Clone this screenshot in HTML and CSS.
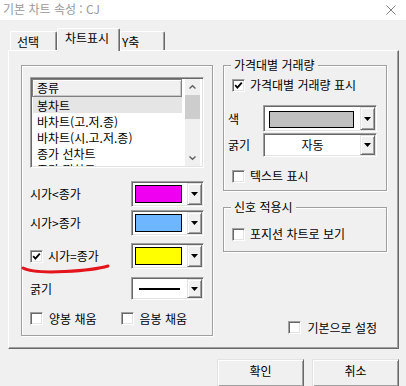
FILE: index.html
```html
<!DOCTYPE html>
<html lang="ko">
  <head>
    <meta charset="UTF-8" />
    <meta name="viewport" content="width=device-width, initial-scale=1.0" />
    <title>기본 차트 속성</title>
    <link rel="stylesheet" href="styles.css">
  </head>
  <body>
    <div class="titlebar">
      <span class="title">기본 차트 속성 : CJ</span>
      <svg class="close" viewBox="0 0 10 10"><path d="M0.5 0.5 L9.5 9.5 M9.5 0.5 L0.5 9.5" /></svg>
    </div>

    <div class="dialog">
      <div class="tabs">
        <div class="tab tab-select">선택</div>
        <div class="tab tab-chart active">차트표시</div>
        <div class="tab tab-y">Y축</div>
      </div>

      <div class="panel">
        <div class="group-chart">
          <div class="listbox">
            <div class="list">
              <div class="list-head">종류</div>
              <div class="list-item selected">봉차트</div>
              <div class="list-item">바차트(고.저.종)</div>
              <div class="list-item">바차트(시.고.저.종)</div>
              <div class="list-item">종가 선차트</div>
              <div class="list-item">종가 꺾차트</div>
            </div>
            <div class="scrollbar">
              <div class="scroll-btn"><svg viewBox="0 0 7 4"><path d="M0.5 3.5 L3.5 0.7 L6.5 3.5" /></svg></div>
              <div class="scroll-track"><div class="scroll-thumb"></div></div>
              <div class="scroll-btn"><svg viewBox="0 0 7 4"><path d="M0.5 0.5 L3.5 3.3 L6.5 0.5" /></svg></div>
            </div>
          </div>

          <div class="field-row row-up">
            <span>시가&lt;종가</span>
            <div class="combo combo-small">
              <div class="combo-field"><span class="swatch swatch-magenta"></span></div>
              <div class="drop-btn"><svg viewBox="0 0 7 4"><polygon points="0,0 7,0 3.5,4" /></svg></div>
            </div>
          </div>

          <div class="field-row row-down">
            <span>시가&gt;종가</span>
            <div class="combo combo-small">
              <div class="combo-field"><span class="swatch swatch-blue"></span></div>
              <div class="drop-btn"><svg viewBox="0 0 7 4"><polygon points="0,0 7,0 3.5,4" /></svg></div>
            </div>
          </div>

          <div class="field-row row-same">
            <label class="check-label">
              <span class="check"><svg viewBox="0 0 9 9"><path d="M1.2 4.2 L3.4 6.6 L7.8 1.6" /></svg></span>
              시가=종가
            </label>
            <div class="combo combo-small">
              <div class="combo-field"><span class="swatch swatch-yellow"></span></div>
              <div class="drop-btn"><svg viewBox="0 0 7 4"><polygon points="0,0 7,0 3.5,4" /></svg></div>
            </div>
          </div>

          <div class="field-row row-line">
            <span>굵기</span>
            <div class="combo combo-line">
              <div class="combo-field"><span class="line-sample"></span></div>
              <div class="drop-btn"><svg viewBox="0 0 7 4"><polygon points="0,0 7,0 3.5,4" /></svg></div>
            </div>
          </div>

          <div class="fill-row">
            <label class="check-label"><span class="check"></span>양봉 채움</label>
            <label class="check-label"><span class="check"></span>음봉 채움</label>
          </div>
        </div>

        <div class="side">
          <div class="groupbox gb-volume">
            <span class="groupbox-title">가격대별 거래량</span>
            <label class="check-label vol-show">
              <span class="check"><svg viewBox="0 0 9 9"><path d="M1.2 4.2 L3.4 6.6 L7.8 1.6" /></svg></span>
              가격대별 거래량 표시
            </label>
            <div class="field-row vol-color">
              <span class="side-label">색</span>
              <div class="combo combo-wide">
                <div class="combo-field"><span class="swatch swatch-grey"></span></div>
                <div class="drop-btn"><svg viewBox="0 0 7 4"><polygon points="0,0 7,0 3.5,4" /></svg></div>
              </div>
            </div>
            <div class="field-row vol-width">
              <span class="side-label">굵기</span>
              <div class="combo combo-select">
                <div class="combo-field">자동</div>
                <div class="drop-btn"><svg viewBox="0 0 7 4"><polygon points="0,0 7,0 3.5,4" /></svg></div>
              </div>
            </div>
            <label class="check-label vol-text"><span class="check"></span>텍스트 표시</label>
          </div>

          <div class="groupbox gb-signal">
            <span class="groupbox-title">신호 적용시</span>
            <label class="check-label sig-row"><span class="check"></span>포지션 차트로 보기</label>
          </div>

          <label class="check-label default-row"><span class="check"></span>기본으로 설정</label>
        </div>
      </div>

      <div class="buttons">
        <button class="btn">확인</button>
        <button class="btn">취소</button>
      </div>
    </div>

    <svg class="annotation" viewBox="0 0 406 386">
      <path d="M23 268 C 30 272, 45 272.5, 65 271.5 S 100 268.5, 108 266" />
    </svg>
  </body>
</html>
```

FILE: styles.css
```css
* {
  box-sizing: border-box;
}
body {
  position: relative;
  margin: 0;
  width: 406px;
  height: 386px;
  overflow: hidden;
  background: #f0f0f0;
  color: #000;
  font-family: "Noto Sans CJK KR", "Noto Sans", sans-serif;
  font-size: 12px;
  line-height: 14px;
  white-space: nowrap;
}

.titlebar {
  height: 20px;
  background: #fff;
  display: flex;
  align-items: center;
  justify-content: space-between;
  padding: 0 10px 2px 3px;
}
.title {
  font-size: 12px;
  color: #999;
}
.close {
  width: 10px;
  height: 10px;
  margin-top: 1px;
}
.close path {
  stroke: #808080;
  stroke-width: 1;
  fill: none;
}

.dialog {
  padding: 8px 7px 0 8px;
}

/* tabs */
.tabs {
  display: flex;
  align-items: flex-end;
  height: 22px;
  padding-left: 2px;
}
.tab {
  height: 19px;
  border: 1px solid;
  border-color: #fff #696969 transparent #fff;
  border-bottom: none;
  border-radius: 2px 2px 0 0;
  box-shadow: inset -1px 0 #a0a0a0;
  padding: 3px 0 0 6px;
}
.tab-select {
  width: 47px;
}
.tab.active {
  position: relative;
  z-index: 1;
  width: 63px;
  height: 23px;
  margin-bottom: -1px;
  padding: 2px 0 0 7px;
  background: #f0f0f0;
}
.tab-y {
  width: 45px;
  padding-left: 1px;
}

.panel {
  width: 391px;
  height: 299px;
  border: 1px solid;
  border-color: #fff #696969 #696969 #fff;
  box-shadow: inset -1px -1px #a0a0a0;
  padding: 14px 0 0 12px;
  display: flex;
  gap: 10px;
  align-items: flex-start;
}

/* left group */
.group-chart {
  width: 192px;
  height: 271px;
  border: 1px solid #a0a0a0;
  box-shadow: inset 1px 1px #fff, 1px 1px #fff;
  padding: 11px 8px 0 8px;
}

.listbox {
  height: 91px;
  display: flex;
  background: #fff;
  border: 1px solid;
  border-color: #a0a0a0 #fff #fff #a0a0a0;
  box-shadow: inset 1px 1px #696969, inset -1px -1px #e3e3e3;
  padding: 1px;
}
.list {
  width: 153px;
  overflow: hidden;
}
.list-head {
  width: 150px;
  height: 18px;
  border: 1px solid #808080;
  box-shadow: inset 1px 1px #fff, inset -1px -1px #c8c8c8;
  background: #f0f0f0;
  padding: 1px 0 0 4px;
}
.list-item {
  width: 150px;
  height: 16px;
  padding: 2px 0 0 5px;
}
.list-item.selected {
  width: 149px;
  margin-left: 1px;
  padding-left: 4px;
  background: #e5e5e5;
}

.scrollbar {
  width: 15px;
  display: flex;
  flex-direction: column;
  background: #f0f0f0;
}
.scroll-btn {
  height: 16px;
  display: flex;
  align-items: center;
  justify-content: center;
}
.scroll-btn svg {
  width: 7px;
  height: 4px;
  overflow: visible;
}
.scroll-btn path {
  stroke: #606060;
  stroke-width: 1.4;
  fill: none;
}
.scroll-track {
  flex: 1;
}
.scroll-thumb {
  height: 24px;
  background: #cdcdcd;
}

.field-row {
  display: flex;
  align-items: center;
  justify-content: space-between;
  height: 26px;
}
.row-up {
  margin-top: 13px;
}
.row-down {
  margin-top: 3px;
}
.row-same {
  margin-top: 7px;
}
.row-line {
  margin-top: 8px;
  height: 23px;
}

.fill-row {
  display: flex;
  gap: 24px;
  margin-top: 12px;
  height: 13px;
}
.fill-row .check-label {
  gap: 6px;
}

/* combo boxes */
.combo {
  display: flex;
  background: #fff;
  border: 1px solid;
  border-color: #a0a0a0 #fff #fff #a0a0a0;
  box-shadow: inset 1px 1px #696969, inset -1px -1px #e3e3e3;
  padding: 1px;
}
.combo-field {
  flex: 1;
  display: flex;
}
.combo-small {
  width: 73px;
  height: 26px;
}
.combo-small .combo-field {
  padding: 2px 5px 2px 2px;
}
.combo-wide {
  width: 114px;
  height: 27px;
}
.combo-wide .combo-field {
  padding: 4px 6px 2px 4px;
}
.combo-line {
  width: 73px;
  height: 23px;
}
.combo-line .combo-field {
  align-items: center;
  padding: 0 7px 0 6px;
}
.combo-select {
  width: 114px;
  height: 24px;
}
.combo-select .combo-field {
  align-items: center;
  justify-content: center;
}
.swatch {
  flex: 1;
  border: 1px solid #000;
}
.swatch-magenta {
  background: #f000f0;
}
.swatch-blue {
  background: #6eb6ff;
}
.swatch-yellow {
  background: #ffff00;
}
.swatch-grey {
  background: #c0c0c0;
}
.line-sample {
  flex: 1;
  height: 2px;
  background: #000;
}
.drop-btn {
  width: 15px;
  background: #f0f0f0;
  border: 1px solid;
  border-color: #e3e3e3 #696969 #696969 #e3e3e3;
  box-shadow: inset 1px 1px #fff, inset -1px -1px #a0a0a0;
  display: flex;
  align-items: center;
  justify-content: center;
}
.drop-btn svg {
  width: 7px;
  height: 4px;
}
.drop-btn polygon {
  fill: #000;
}

/* check boxes */
.check-label {
  display: flex;
  align-items: center;
  gap: 5px;
}
.check {
  flex: none;
  width: 13px;
  height: 13px;
  background: #fff;
  border: 1px solid;
  border-color: #a0a0a0 #fff #fff #a0a0a0;
  box-shadow: inset 1px 1px #696969, inset -1px -1px #e3e3e3;
  display: flex;
  align-items: center;
  justify-content: center;
}
.check svg {
  width: 9px;
  height: 9px;
}
.check path {
  stroke: #000;
  stroke-width: 1.8;
  fill: none;
}

/* right side */
.side {
  width: 164px;
  height: 271px;
  display: flex;
  flex-direction: column;
}
.groupbox {
  display: flex;
  flex-direction: column;
  border: 1px solid #a0a0a0;
  box-shadow: inset 1px 1px #fff, 1px 1px #fff;
  padding: 0 9px 4px 8px;
}
.groupbox-title {
  align-self: flex-start;
  margin: -8px 0 0 -1px;
  padding: 0 3px;
  background: #f0f0f0;
  line-height: 14px;
}
.vol-show {
  height: 26px;
}
.vol-color {
  margin-top: 7px;
  height: 27px;
}
.vol-width {
  margin-top: 1px;
  height: 24px;
}
.side-label {
  margin-left: -4px;
}
.vol-text {
  margin-top: 9px;
  height: 20px;
}
.gb-signal {
  margin-top: 16px;
}
.sig-row {
  margin-top: 7px;
  height: 26px;
}
.default-row {
  align-self: flex-end;
  height: 13px;
  margin: auto 10px 2px 0;
  gap: 6px;
}

/* buttons */
.buttons {
  display: flex;
  justify-content: flex-end;
  gap: 8px;
  margin-top: 10px;
}
.btn {
  width: 87px;
  height: 28px;
  font-family: inherit;
  font-size: 12px;
  line-height: 14px;
  color: #000;
  background: #f0f0f0;
  border: 1px solid;
  border-color: #e3e3e3 #696969 #696969 #e3e3e3;
  box-shadow: inset 1px 1px #fff, inset -1px -1px #a0a0a0;
  padding: 0 0 4px;
}

.annotation {
  position: absolute;
  left: 0;
  top: 0;
  width: 406px;
  height: 386px;
  pointer-events: none;
}
.annotation path {
  stroke: #e3141b;
  stroke-width: 3;
  stroke-linecap: round;
  fill: none;
}
```
